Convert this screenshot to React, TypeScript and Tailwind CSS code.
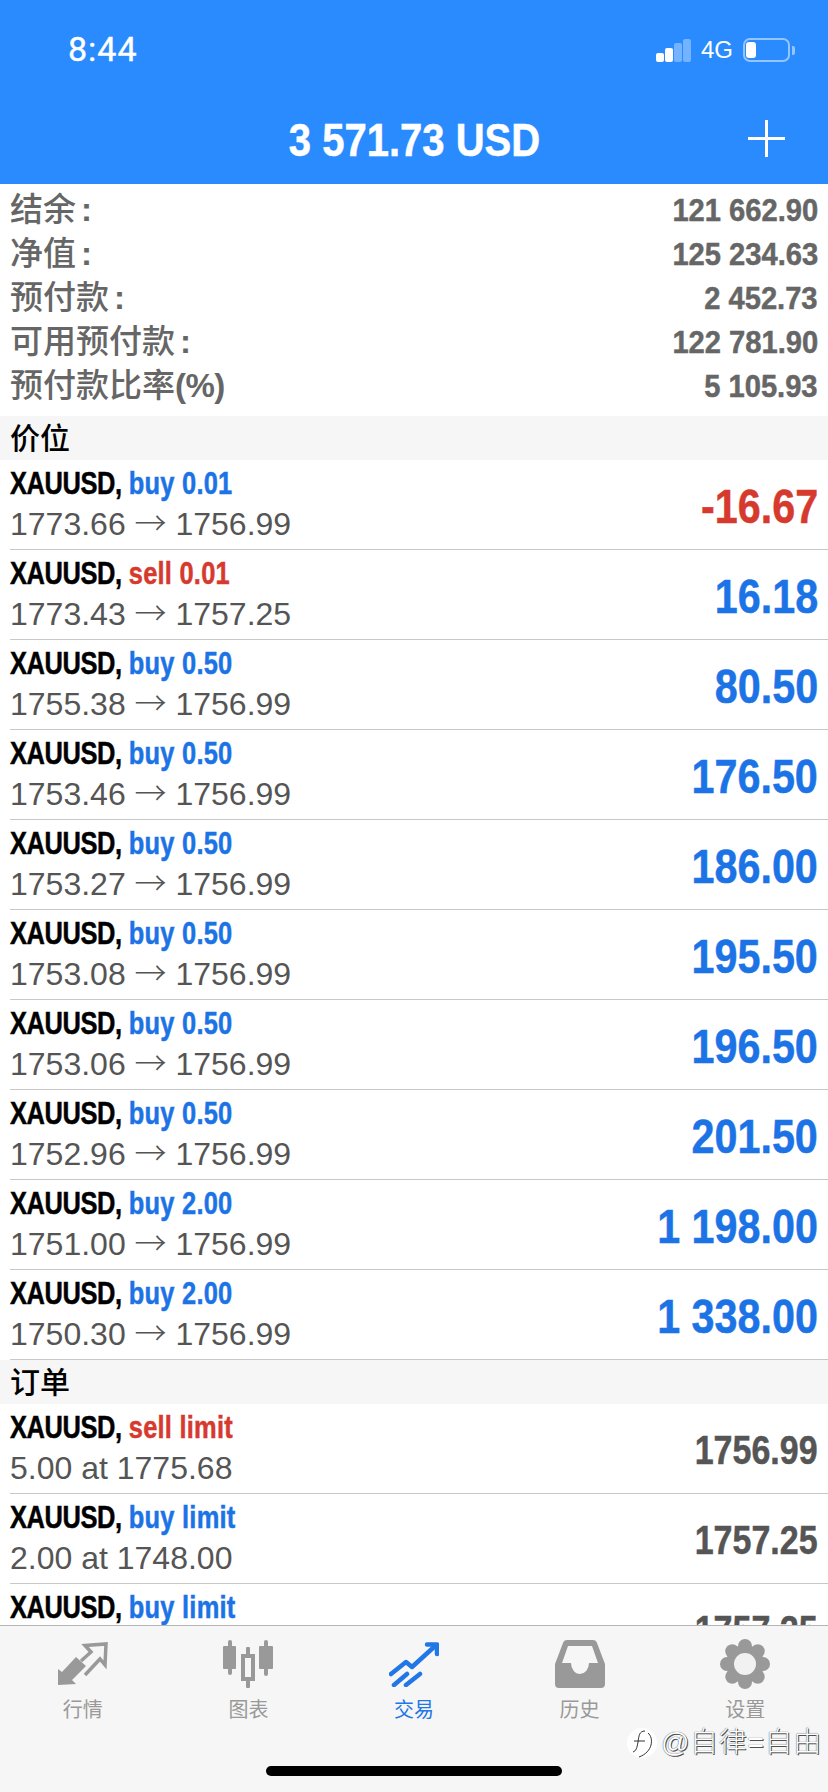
import { FC, ReactNode } from "react";
import { clsx } from "clsx";

const FONT = "font-['Liberation_Sans','Noto_Sans_CJK_SC',sans-serif]";
const HEAVY = "[-webkit-text-stroke:0.5px]";

type Side = "buy" | "sell";

const summary = [
  ["结余", "121 662.90"],
  ["净值", "125 234.63"],
  ["预付款", "2 452.73"],
  ["可用预付款", "122 781.90"],
];

const positions: { side: Side; lot: string; from: string; to: string; profit: string }[] = [
  { side: "buy", lot: "0.01", from: "1773.66", to: "1756.99", profit: "-16.67" },
  { side: "sell", lot: "0.01", from: "1773.43", to: "1757.25", profit: "16.18" },
  { side: "buy", lot: "0.50", from: "1755.38", to: "1756.99", profit: "80.50" },
  { side: "buy", lot: "0.50", from: "1753.46", to: "1756.99", profit: "176.50" },
  { side: "buy", lot: "0.50", from: "1753.27", to: "1756.99", profit: "186.00" },
  { side: "buy", lot: "0.50", from: "1753.08", to: "1756.99", profit: "195.50" },
  { side: "buy", lot: "0.50", from: "1753.06", to: "1756.99", profit: "196.50" },
  { side: "buy", lot: "0.50", from: "1752.96", to: "1756.99", profit: "201.50" },
  { side: "buy", lot: "2.00", from: "1751.00", to: "1756.99", profit: "1 198.00" },
  { side: "buy", lot: "2.00", from: "1750.30", to: "1756.99", profit: "1 338.00" },
];

const orders: { side: Side; detail: string; price: string }[] = [
  { side: "sell", detail: "5.00 at 1775.68", price: "1756.99" },
  { side: "buy", detail: "2.00 at 1748.00", price: "1757.25" },
  { side: "buy", detail: "2.00 at 1748.00", price: "1757.25" },
];

const Row: FC<{ side: Side; action: string; detail: ReactNode; value: ReactNode }> = ({
  side,
  action,
  detail,
  value,
}) => (
  <div className="ml-[10px] flex h-[90px] items-center justify-between border-b border-[#c8c8c8] pr-[10px]">
    <div className="flex flex-col pb-[4px]">
      <div className={clsx("h-[42px] origin-left scale-x-[0.795] whitespace-nowrap text-[32px] leading-[42px] font-bold text-black", HEAVY)}>
        <span className="tracking-[-0.5px]">XAUUSD,</span>{" "}
        <span className={clsx("tracking-[0.3px]", side === "buy" ? "text-[#1c73e6]" : "text-[#d63a2e]")}>{action}</span>
      </div>
      <div className="h-[40px] whitespace-nowrap text-[32px] leading-[40px] text-[#555]">{detail}</div>
    </div>
    {value}
  </div>
);

const SectionTitle: FC<{ children: ReactNode }> = ({ children }) => (
  <div className="flex h-[44px] items-center bg-[#f6f6f6] pl-[10px] text-[30px] font-medium text-black">
    {children}
  </div>
);

const MarketsIcon = () => (
  <svg width="50" height="44" viewBox="0 0 50 44">
    <path d="M23 19 L33 10 L27 3.5 L48 2 L47 23 L42 17 L27 33" fill="none" stroke="#999" strokeWidth="3.5" />
    <path d="M0 27 L4 30 L18 15 L28 24 L14 38 L18 42 L0 43 Z" fill="#999" />
  </svg>
);

const ChartsIcon = () => (
  <svg width="50" height="48" viewBox="0 0 50 48" fill="#999">
    <rect x="5" y="0" width="4" height="35" rx="2" />
    <rect x="0" y="6" width="13" height="23" rx="1" />
    <rect x="41" y="0" width="4" height="36" rx="2" />
    <rect x="36" y="6" width="14" height="23" rx="1" />
    <rect x="23" y="7" width="4" height="41" rx="1" />
    <rect x="20" y="16" width="10" height="23" fill="#f6f6f6" stroke="#999" strokeWidth="4" />
  </svg>
);

const TradeIcon = () => (
  <svg width="50" height="45" viewBox="0 0 50 45" fill="none" stroke="#2277e6" strokeWidth="4.5" strokeLinecap="round" strokeLinejoin="round">
    <path d="M2 32 L17 20 L23 25 L45 5" />
    <path d="M38 2.5 H48 V12" strokeWidth="4.5" />
    <path d="M5 43 L18 32 M17 43 L31 32" />
  </svg>
);

const HistoryIcon = () => (
  <svg width="50" height="48" viewBox="0 0 50 48">
    <path
      fillRule="evenodd"
      fill="#999"
      d="M12 0 H38 Q41 0 42 3 L50 24 V44 Q50 48 46 48 H4 Q0 48 0 44 V24 L8 3 Q9 0 12 0 Z M13 6 H37 L43 23 H34 A9 11 0 0 1 16 23 H7 Z"
    />
  </svg>
);

const SettingsIcon = () => (
  <svg width="50" height="50" viewBox="-25 -25 50 50">
    <g fill="#999">
      <circle r="19" />
      {[0, 45, 90, 135, 180, 225, 270, 315].map((deg) => (
        <circle key={deg} cy="-18" r="7" transform={`rotate(${deg})`} />
      ))}
    </g>
    <circle r="11" fill="#f1f1f1" />
  </svg>
);

const tabs = [
  { label: "行情", icon: <MarketsIcon /> },
  { label: "图表", icon: <ChartsIcon /> },
  { label: "交易", icon: <TradeIcon />, active: true },
  { label: "历史", icon: <HistoryIcon /> },
  { label: "设置", icon: <SettingsIcon /> },
];

const StatusBar = () => (
  <div className="flex h-[100px] items-start justify-between pt-[29px] pr-[33px] pl-[68px] text-white">
    <span className="font-['Roboto',sans-serif] text-[34px] leading-[40px] tracking-[1px] [-webkit-text-stroke:0.4px]">8:44</span>
    <div className="mt-[9px] flex items-end">
      <div className="flex h-[23px] items-end gap-[1px]">
        <span className="h-[9px] w-[8px] rounded-[2px] bg-white" />
        <span className="h-[14px] w-[8px] rounded-[2px] bg-white" />
        <span className="h-[19px] w-[8px] rounded-[2px] bg-white/35" />
        <span className="h-[23px] w-[8px] rounded-[2px] bg-white/35" />
      </div>
      <span className="ml-[10px] text-[24px] leading-[24px]">4G</span>
      <div className="ml-[10px] flex h-[24px] w-[47px] items-center rounded-[7px] border-2 border-white/50 px-[1px]">
        <span className="h-[16px] w-[10px] rounded-[3px] bg-white" />
      </div>
      <span className="mb-[7px] ml-[2px] h-[9px] w-[3px] rounded-r-[2px] bg-white/50" />
    </div>
  </div>
);

const SummaryRow: FC<{ label: ReactNode; value: string }> = ({ label, value }) => (
  <div className="flex h-[44px] items-center justify-between px-[10px] text-[#666]">
    <span className="text-[33px] leading-[44px] font-medium">{label}</span>
    <span className={clsx("origin-right scale-x-[0.91] whitespace-nowrap text-[32px] leading-[44px] font-bold", HEAVY)}>{value}</span>
  </div>
);

export default function App() {
  return (
    <div className={clsx("relative flex h-[1792px] w-[828px] flex-col overflow-hidden bg-white", FONT)}>
      <header className="h-[184px] shrink-0 bg-[#2a8bff]">
        <StatusBar />
        <div className="relative flex h-[84px] items-center justify-center">
          <h1 className={clsx("origin-center scale-x-[0.87] whitespace-nowrap pb-[3px] text-[46px] font-bold text-white", HEAVY)}>
            3 571.73 USD
          </h1>
          <svg className="absolute top-[20px] right-[43px]" width="37" height="37" viewBox="0 0 37 37" stroke="white" strokeWidth="3">
            <path d="M18.5 0 V37 M0 18.5 H37" />
          </svg>
        </div>
      </header>

      <main className="min-h-0 flex-1 overflow-hidden">
        <section className="pt-[4px] pb-[8px]">
          {summary.map(([label, value]) => (
            <SummaryRow
              key={label}
              label={
                <>
                  {label}
                  <span className="ml-[5px] font-bold">:</span>
                </>
              }
              value={value}
            />
          ))}
          <SummaryRow
            label={
              <>
                预付款比率<span className="font-bold tracking-[-0.5px]">(%)</span>
              </>
            }
            value="5 105.93"
          />
        </section>

        <SectionTitle>价位</SectionTitle>
        {positions.map((p, i) => (
          <Row
            key={i}
            side={p.side}
            action={`${p.side} ${p.lot}`}
            detail={
              <>
                {p.from} <span className="font-['Noto_Sans_CJK_SC',sans-serif] leading-[0] font-light">→</span> {p.to}
              </>
            }
            value={
              <span
                className={clsx(
                  "block origin-right scale-x-[0.86] whitespace-nowrap pt-[5px] text-[48px] font-bold",
                  HEAVY,
                  p.profit.startsWith("-") ? "text-[#d63a2e]" : "text-[#1c73e6]",
                )}
              >
                {p.profit}
              </span>
            }
          />
        ))}

        <SectionTitle>订单</SectionTitle>
        {orders.map((o, i) => (
          <Row
            key={i}
            side={o.side}
            action={`${o.side} limit`}
            detail={o.detail}
            value={
              <span className={clsx("block origin-right scale-x-[0.85] whitespace-nowrap pt-[2px] text-[40px] font-bold text-[#555]", HEAVY)}>
                {o.price}
              </span>
            }
          />
        ))}
      </main>

      <nav className="grid h-[167px] shrink-0 grid-cols-5 border-t border-[#b5b5b5] bg-[#f6f6f6] pt-[13px]">
        {tabs.map((t) => (
          <div key={t.label} className="flex flex-col items-center">
            <div className="flex h-[50px] items-center justify-center">{t.icon}</div>
            <span className={clsx("mt-[8px] text-[20px] leading-[26px]", t.active ? "text-[#2277e6]" : "text-[#999]")}>
              {t.label}
            </span>
          </div>
        ))}
      </nav>

      {/* watermark over the tab bar */}
      <div className="absolute top-[1727px] left-[627px] flex items-center">
        <div className="relative flex h-[30px] w-[30px] items-center justify-center rounded-full bg-white">
          <svg width="26" height="34" viewBox="0 0 26 34" fill="none" stroke="#333" strokeWidth="1">
            <path d="M16 5 C10 5 10 10 9 16 C8 22 7 25 4 26 M5 15 H16 M19 7 C25 12 24 26 10 31" />
          </svg>
        </div>
        <span className="ml-[4px] text-[28px] leading-[32px] font-light tracking-[0.7px] text-white [text-shadow:0_0_1px_#222,1px_1px_0_#555]">
          @自律=自由
        </span>
      </div>

      {/* home indicator */}
      <div className="absolute top-[1766px] left-[266px] h-[10px] w-[296px] rounded-full bg-black" />
    </div>
  );
}
